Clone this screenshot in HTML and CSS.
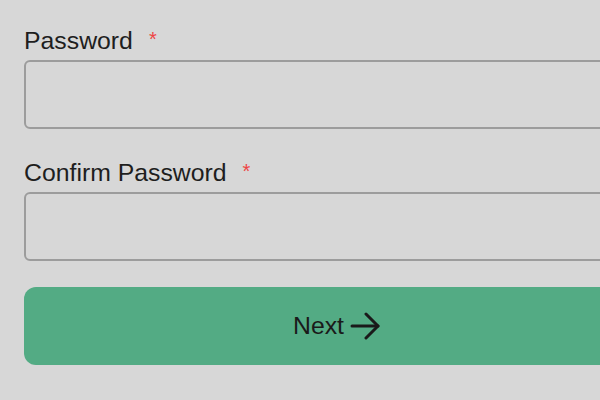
FILE: index.html
```html
<!DOCTYPE html>
<html>
<head>
<meta charset="utf-8">
<link rel="stylesheet" href="styles.css">
</head>
<body>
<form class="form">
  <div class="field">
    <label class="label">Password<span class="req">*</span></label>
    <input class="input" type="password">
  </div>
  <div class="field">
    <label class="label">Confirm Password<span class="req">*</span></label>
    <input class="input" type="password">
  </div>
  <button class="btn" type="button">
    <span>Next</span>
    <svg class="arrow" width="30" height="28" viewBox="0 0 30 28" fill="none" stroke="#1a1a1a" stroke-width="3" stroke-linecap="round" stroke-linejoin="round">
      <path d="M2 14H28"/>
      <path d="M16 2L28 14L16 26"/>
    </svg>
  </button>
</form>
</body>
</html>
```

FILE: styles.css
```css
html, body {
  margin: 0;
  padding: 0;
  background: #d7d7d7;
  overflow: hidden;
}
.form {
  width: 625px;
  padding: 27px 0 0 24px;
  display: flex;
  flex-direction: column;
  font-family: "Liberation Sans", Arial, sans-serif;
  color: #1e1e1e;
}
.field {
  display: flex;
  flex-direction: column;
  gap: 5px;
}
.field + .field {
  margin-top: 30px;
}
.label {
  font-size: 24.8px;
  line-height: 28px;
  height: 28px;
}
.req {
  color: #ee4444;
  margin-left: 16px;
  font-size: 20px;
  position: relative;
  top: -3px;
}
.input {
  box-sizing: border-box;
  height: 69px;
  width: 100%;
  margin: 0;
  border: 2px solid #9c9c9c;
  border-radius: 6px;
  background: #d7d7d7;
}
.btn {
  margin-top: 26px;
  box-sizing: border-box;
  height: 78px;
  width: 100%;
  border: none;
  border-radius: 12px;
  background: #53ab84;
  font-family: "Liberation Sans", Arial, sans-serif;
  font-size: 24.8px;
  color: #1a1a1a;
  display: flex;
  align-items: center;
  justify-content: center;
  gap: 6px;
  padding: 0;
}
.arrow {
  display: block;
}
```
